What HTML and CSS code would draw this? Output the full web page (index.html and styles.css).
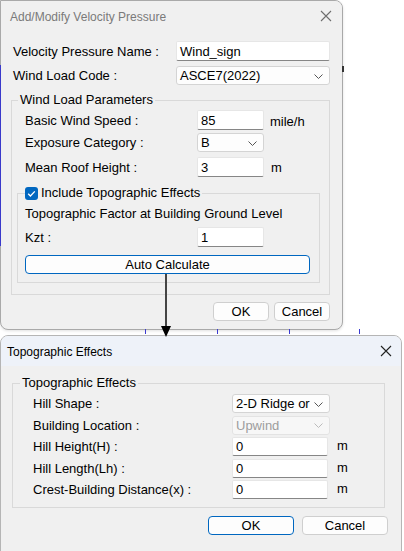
FILE: index.html
```html
<!DOCTYPE html>
<html>
<head>
<meta charset="utf-8">
<link rel="stylesheet" href="styles.css">
</head>
<body>
<div class="screen">
  <section class="dlg dlg-main">
    <header class="titlebar">
      <span class="title">Add/Modify Velocity Pressure</span>
      <svg class="close" width="12" height="12" viewBox="0 0 12 12"><path d="M1 1L11 11M11 1L1 11" stroke="#6e6e6e" stroke-width="1.1" fill="none"/></svg>
    </header>
    <div class="body">
      <div class="row r-name"><span class="lbl l-main">Velocity Pressure Name :</span><div class="tb w-wide">Wind_sign</div></div>
      <div class="row r-code"><span class="lbl l-main">Wind Load Code :</span><div class="cb w-wide">ASCE7(2022)<svg class="chev" width="9" height="5" viewBox="0 0 9 5"><path d="M0.5 0.5L4.5 4.5L8.5 0.5" stroke="#555" fill="none"/></svg></div></div>
      <fieldset class="group g-wind">
        <legend class="legend">Wind Load Parameters</legend>
        <div class="group-inner gi-wind">
          <div class="row r-first"><span class="lbl l-param">Basic Wind Speed :</span><div class="tb w-short">85</div><span class="unit unit-mph">mile/h</span></div>
          <div class="row r-exp"><span class="lbl l-param">Exposure Category :</span><div class="cb w-short">B<svg class="chev" width="9" height="5" viewBox="0 0 9 5"><path d="M0.5 0.5L4.5 4.5L8.5 0.5" stroke="#555" fill="none"/></svg></div></div>
          <div class="row r-roof"><span class="lbl l-param">Mean Roof Height :</span><div class="tb w-short">3</div><span class="unit unit-m">m</span></div>
          <fieldset class="group g-topo">
            <legend class="legend legend-check"><span class="check"><svg width="13" height="13" viewBox="0 0 13 13"><path d="M3.2 6.8L5.4 9L9.8 4.4" stroke="#fff" stroke-width="1.3" fill="none"/></svg></span>Include Topographic Effects</legend>
            <div class="group-inner gi-topo">
              <div class="text-row">Topographic Factor at Building Ground Level</div>
              <div class="row r-kzt"><span class="lbl l-kzt">Kzt :</span><div class="tb w-short">1</div></div>
              <div class="btn btn-focus btn-auto">Auto Calculate</div>
            </div>
          </fieldset>
        </div>
      </fieldset>
      <div class="btn-row btn-row-main">
        <div class="btn btn-small">OK</div>
        <div class="btn btn-small">Cancel</div>
      </div>
    </div>
  </section>

  <section class="dlg dlg-topo">
    <header class="titlebar titlebar-active">
      <span class="title title-active">Topographic Effects</span>
      <svg class="close" width="12" height="12" viewBox="0 0 12 12"><path d="M1 1L11 11M11 1L1 11" stroke="#222" stroke-width="1.1" fill="none"/></svg>
    </header>
    <div class="body body-topo">
      <fieldset class="group g-effects">
        <legend class="legend legend-effects">Topographic Effects</legend>
        <div class="group-inner gi-effects">
          <div class="row2 r2-first"><span class="lbl l-topo">Hill Shape :</span><div class="cb w-sel">2-D Ridge or<svg class="chev" width="9" height="5" viewBox="0 0 9 5"><path d="M0.5 0.5L4.5 4.5L8.5 0.5" stroke="#555" fill="none"/></svg></div></div>
          <div class="row2"><span class="lbl l-topo">Building Location :</span><div class="cb cb-disabled w-sel">Upwind<svg class="chev" width="9" height="5" viewBox="0 0 9 5"><path d="M0.5 0.5L4.5 4.5L8.5 0.5" stroke="#bbb" fill="none"/></svg></div></div>
          <div class="row2"><span class="lbl l-topo">Hill Height(H) :</span><div class="tb w-in">0</div><span class="unit unit-m2">m</span></div>
          <div class="row2"><span class="lbl l-topo">Hill Length(Lh) :</span><div class="tb w-in">0</div><span class="unit unit-m2">m</span></div>
          <div class="row2"><span class="lbl l-topo">Crest-Building Distance(x) :</span><div class="tb w-in">0</div><span class="unit unit-m2">m</span></div>
        </div>
      </fieldset>
      <div class="btn-row btn-row-topo">
        <div class="btn btn-focus btn-wide">OK</div>
        <div class="btn btn-wide">Cancel</div>
      </div>
    </div>
  </section>

  <div class="deco deco-left"></div>
  <div class="deco deco-right"></div>
  <div class="deco tick t1"></div>
  <div class="deco tick t2"></div>
  <div class="deco tick t3"></div>
  <div class="deco tick t4"></div>
  <div class="arrow">
    <div class="arrow-line"></div>
    <div class="arrow-head"></div>
  </div>
</div>
</body>
</html>
```

FILE: styles.css
```css
html, body {
  margin: 0;
  padding: 0;
  background: #ffffff;
}

body {
  font-family: "Liberation Sans", Arial, sans-serif;
  font-size: 13px;
  color: #000;
}

.screen {
  position: relative;
  width: 404px;
  height: 551px;
  overflow: hidden;
  background: #fff;
}

.dlg {
  position: relative;
  z-index: 1;
  box-sizing: border-box;
  background: #f0f0f0;
  border: 1px solid #a9a9a9;
  overflow: hidden;
}

.dlg-main {
  width: 343px;
  height: 330px;
  border-radius: 0 8px 8px 8px;
  box-shadow: 0 1px 3px rgba(0,0,0,0.12);
}

.dlg-topo {
  margin-top: 5px;
  width: 402px;
  height: 240px;
  border-radius: 8px 8px 0 0;
  border-color: #b5b5b5;
}

.titlebar {
  height: 30px;
  display: flex;
  align-items: center;
  justify-content: space-between;
  padding: 0 10px 0 9px;
  background: #f0f0f0;
}

.title {
  font-size: 12px;
  color: #7a7a7a;
  margin-top: 1px;
}

.titlebar-active {
  background: #eef2f9;
  padding: 0 9px 0 6px;
}

.title-active {
  color: #000;
}

.body {
  padding: 0 12px;
}

.row {
  display: flex;
  align-items: center;
  height: 20px;
}

.lbl {
  flex: none;
  white-space: nowrap;
}

.l-main { width: 163px; }
.l-param { width: 172px; }
.l-kzt { width: 172px; }
.l-topo { width: 199px; }

.r-name { margin-top: 10px; }
.r-code { margin-top: 5px; height: 19px; }

.tb, .cb {
  box-sizing: border-box;
  height: 100%;
  display: flex;
  align-items: center;
  padding-left: 3px;
  background: #fff;
  white-space: nowrap;
}

.tb {
  border: 1px solid #e6e6e6;
  border-bottom: 1px solid #868686;
  border-radius: 2px;
}

.cb {
  position: relative;
  border: 1px solid #d4d4d4;
  border-radius: 3px;
  background: #fdfdfd;
}

.cb-disabled {
  color: #9d9d9d;
  background: #f7f7f7;
  border-color: #e3e3e3;
}

.chev {
  position: absolute;
  right: 6px;
  top: 50%;
  margin-top: -2px;
}

.w-wide { width: 157px; }
.w-short { width: 67px; }
.w-sel { width: 98px; }
.w-in { width: 96px; }

.unit {
  margin-left: 6px;
}

.unit-mph { margin-top: 2px; }
.unit-m { margin-left: 7px; }
.unit-m2 { margin-left: 9px; margin-top: -2px; }

.group {
  margin: 0;
  padding: 0;
  border: 1px solid #d9d9d9;
  min-width: 0;
}

.legend {
  padding: 0 2px;
  margin-left: 6px;
  line-height: 16px;
  height: 16px;
}

.g-wind {
  box-sizing: border-box;
  width: 319px;
  margin: 7px 0 0 -2px;
}

.gi-wind {
  padding: 2px 0 11px 13px;
}

.r-first { margin-top: 0; }
.r-exp { margin-top: 3px; height: 19px; }
.r-roof { margin-top: 5px; }

.g-topo {
  box-sizing: border-box;
  width: 303px;
  margin: 8px 0 0 -8px;
}

.gi-topo {
  padding: 0 0 8px 7px;
}

.legend-check {
  display: flex;
  align-items: center;
  margin-left: 7px;
  padding: 0 2px 0 0;
}

.check {
  width: 13px;
  height: 13px;
  border-radius: 3px;
  background: #0067c0;
  margin-right: 3px;
  display: block;
}

.check svg { display: block; }

.text-row {
  margin-top: 5px;
  line-height: 16px;
}

.r-kzt { margin-top: 5px; }

.btn {
  box-sizing: border-box;
  height: 19px;
  display: flex;
  align-items: center;
  justify-content: center;
  background: #fdfdfd;
  border: 1px solid #cfcfcf;
  border-radius: 4px;
}

.btn-focus {
  border: 1.5px solid #0067c0;
  background: #fdfdfd;
}

.btn-auto {
  width: 285px;
  margin-top: 8px;
}

.btn-row {
  display: flex;
  justify-content: flex-end;
}

.btn-row-main {
  margin-top: 7px;
  gap: 5px;
}

.btn-small { width: 56px; }

.body-topo {
  padding: 0 13px 0 11px;
}

.g-effects {
  box-sizing: border-box;
  width: 373px;
  margin-top: 9px;
}

.gi-effects {
  padding: 3px 0 8px 20px;
}

.legend-effects {
  margin-left: 7px;
}

.row2 {
  display: flex;
  align-items: center;
  height: 19px;
  margin-top: 2.5px;
}

.r2-first { margin-top: 0; }

.btn-row-topo {
  margin-top: 8px;
  gap: 8px;
}

.btn-wide { width: 86px; }

/* background drawing canvas remnants and the annotation arrow */
.deco {
  position: absolute;
  z-index: 2;
}

.deco-left {
  left: 0;
  top: 65px;
  width: 1px;
  height: 181px;
  background: #3a3acb;
}

.deco-right {
  left: 342px;
  top: 66px;
  width: 2px;
  height: 6px;
  background: #333;
}

.tick {
  top: 329px;
  width: 1px;
  height: 5px;
  background: #3b3bd0;
}

.t1 { left: 145px; }
.t2 { left: 217px; }
.t3 { left: 289px; }
.t4 { left: 359px; }

.arrow {
  position: absolute;
  z-index: 3;
  left: 160px;
  top: 274px;
  width: 11px;
  height: 63px;
  display: flex;
  flex-direction: column;
  align-items: center;
}

.arrow-line {
  width: 2px;
  flex: 1;
  background: #454545;
}

.arrow-head {
  width: 0;
  height: 0;
  border-left: 5.5px solid transparent;
  border-right: 5.5px solid transparent;
  border-top: 11px solid #000;
}
```
